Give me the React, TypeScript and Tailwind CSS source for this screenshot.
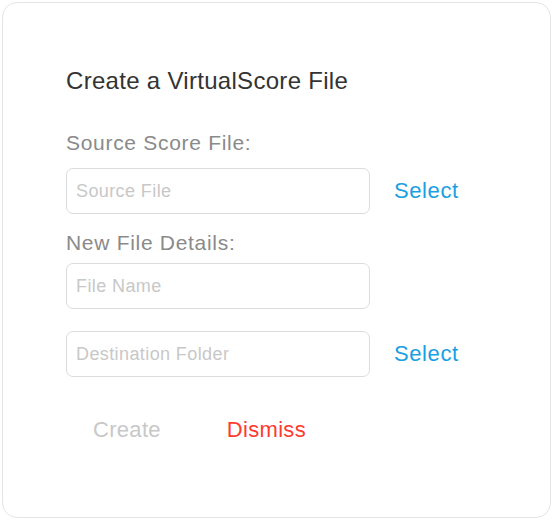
const font = { fontFamily: '"Liberation Sans", Arial, sans-serif' };

function Field({ placeholder }: { placeholder: string }) {
  return (
    <input
      placeholder={placeholder}
      className="w-[304px] h-[46px] rounded-[7px] border border-[#dcdcdc] bg-white pl-[9px] text-[18px] tracking-[0.4px] text-[#333] placeholder:text-[#c8c8c8] outline-none"
    />
  );
}

function SelectLink() {
  return (
    <button className="ml-[24px] text-[22px] leading-[26px] tracking-[0.6px] text-[#1a9fe2]">
      Select
    </button>
  );
}

export default function App() {
  return (
    <div className="w-[553px] h-[520px] bg-white p-[2px]" style={font}>
      <div className="h-full rounded-[15px] border border-[#e4e4e4] pl-[63px] pt-[64px]">
        <h1 className="text-[24px] leading-[28px] tracking-[0.3px] text-[#333]">
          Create a VirtualScore File
        </h1>

        <div className="mt-[36px] text-[21px] leading-[24px] tracking-[0.7px] text-[#8a8a8a]">
          Source Score File:
        </div>
        <div className="mt-[13px] flex items-center">
          <Field placeholder="Source File" />
          <SelectLink />
        </div>

        <div className="mt-[17px] text-[21px] leading-[24px] tracking-[0.7px] text-[#8a8a8a]">
          New File Details:
        </div>
        <div className="mt-[8px]">
          <Field placeholder="File Name" />
        </div>
        <div className="mt-[22px] flex items-center">
          <Field placeholder="Destination Folder" />
          <SelectLink />
        </div>

        <div className="mt-[41px] flex gap-[66px] pl-[27px] text-[22px] leading-[24px] tracking-[0.3px]">
          <button className="text-[#c8c8c8]">Create</button>
          <button className="text-[#ff3b30]">Dismiss</button>
        </div>
      </div>
    </div>
  );
}
